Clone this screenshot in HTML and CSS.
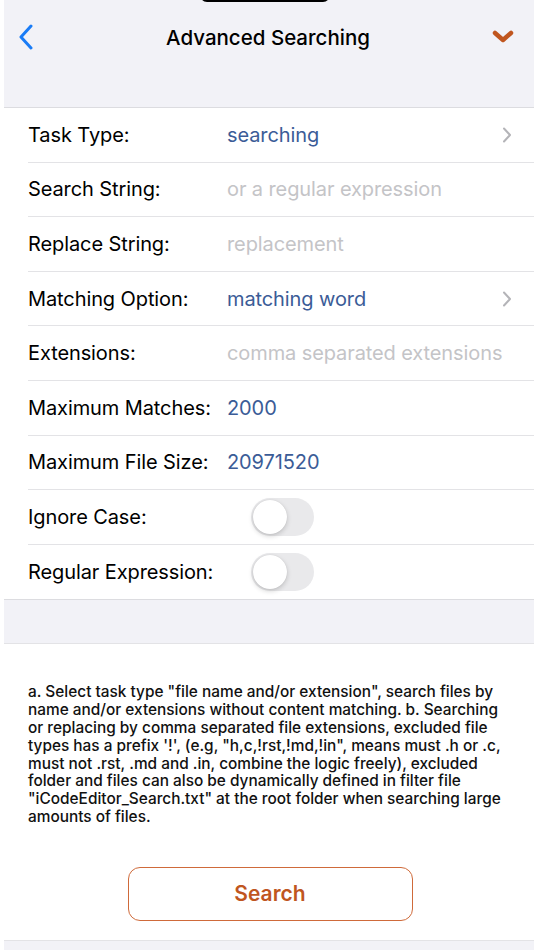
FILE: index.html
```html
<!DOCTYPE html>
<html>
<head>
<meta charset="utf-8">
<link rel="stylesheet" href="styles.css">
</head>
<body>
<div class="screen">
  <header class="header">
    <div class="notch"></div>
    <div class="nav">
      <svg class="back" width="16" height="26" viewBox="0 0 16 26"><path d="M13 2 L3 13 L13 24" fill="none" stroke="#1a7cf6" stroke-width="3" stroke-linecap="round" stroke-linejoin="round"/></svg>
      <div class="title">Advanced Searching</div>
      <svg class="down" width="22" height="14" viewBox="0 0 22 14"><path d="M3 3 L11 10 L19 3" fill="none" stroke="#c0561f" stroke-width="4.5" stroke-linecap="round" stroke-linejoin="round"/></svg>
    </div>
  </header>
  <ul class="list">
    <li class="row"><span class="label">Task Type:</span><span class="value">searching</span><svg class="chev" width="10" height="16" viewBox="0 0 10 16"><path d="M2 1.5 L8 8 L2 14.5" fill="none" stroke="#b4b4b8" stroke-width="2" stroke-linecap="round" stroke-linejoin="round"/></svg></li>
    <li class="row"><span class="label">Search String:</span><span class="placeholder">or a regular expression</span></li>
    <li class="row"><span class="label">Replace String:</span><span class="placeholder">replacement</span></li>
    <li class="row"><span class="label">Matching Option:</span><span class="value">matching word</span><svg class="chev" width="10" height="16" viewBox="0 0 10 16"><path d="M2 1.5 L8 8 L2 14.5" fill="none" stroke="#b4b4b8" stroke-width="2" stroke-linecap="round" stroke-linejoin="round"/></svg></li>
    <li class="row"><span class="label">Extensions:</span><span class="placeholder">comma separated extensions</span></li>
    <li class="row"><span class="label">Maximum Matches:</span><span class="value">2000</span></li>
    <li class="row"><span class="label">Maximum File Size:</span><span class="value">20971520</span></li>
    <li class="row"><span class="label">Ignore Case:</span><span class="toggle"><span class="knob"></span></span></li>
    <li class="row last"><span class="label">Regular Expression:</span><span class="toggle"><span class="knob"></span></span></li>
  </ul>
  <div class="band"></div>
  <div class="footer">
    <p class="note">a. Select task type "file name and/or extension", search files by name and/or extensions without content matching. b. Searching or replacing by comma separated file extensions, excluded file types has a prefix '!', (e.g, "h,c,!rst,!md,!in", means must .h or .c, must not .rst, .md and .in, combine the logic freely), excluded folder and files can also be dynamically defined in filter file "iCodeEditor_Search.txt" at the root folder when searching large amounts of files.</p>
    <div class="btn-wrap"><button class="search-btn">Search</button></div>
  </div>
  <div class="bottom-band"></div>
</div>
</body>
</html>
```

FILE: styles.css
```css
html, body {
  margin: 0;
  padding: 0;
  background: #ffffff;
}
body {
  font-family: Inter, "Noto Sans", "Liberation Sans", sans-serif;
  color: #000;
  overflow: hidden;
}
.screen {
  margin-left: 4px;
  width: 530px;
  height: 950px;
  overflow: hidden;
  position: relative;
  background: #fff;
}
.header {
  height: 107px;
  background: #f2f2f7;
  border-bottom: 1px solid #dcdce0;
  position: relative;
}
.notch {
  position: absolute;
  left: 196px;
  top: -12px;
  width: 130px;
  height: 14px;
  background: #000;
  border-radius: 10px;
}
.nav {
  display: flex;
  align-items: center;
  height: 74px;
  padding: 0 20px 0 14px;
}
.title {
  flex: 1;
  text-align: center;
  font-size: 20.5px;
  font-weight: 500;
  padding-left: 10px;
}
.list {
  list-style: none;
  margin: 0;
  padding: 0 0 0 24px;
}
.row {
  box-sizing: border-box;
  height: 54.6px;
  display: flex;
  align-items: center;
  border-bottom: 1px solid #e3e3e6;
  font-size: 20px;
  letter-spacing: -0.1px;
  padding-right: 22px;
}
.row.last {
  border-bottom: none;
}
.label {
  width: 199px;
  flex: none;
}
.value {
  color: #3b5c97;
  flex: 1;
}
.placeholder {
  color: #c4c4c7;
  flex: 1;
  white-space: nowrap;
}
.chev {
  flex: none;
}
.toggle {
  margin-left: 24px;
  width: 63px;
  height: 38px;
  border-radius: 19px;
  background: #e9e9eb;
  position: relative;
  flex: none;
}
.knob {
  position: absolute;
  left: 2px;
  top: 2px;
  width: 34px;
  height: 34px;
  border-radius: 50%;
  background: #fff;
  box-shadow: 0 2px 5px rgba(0,0,0,0.18), 0 0 1px rgba(0,0,0,0.12);
}
.band {
  height: 43px;
  background: #f2f2f7;
  border-top: 1px solid #dcdce0;
  border-bottom: 1px solid #e3e3e6;
}
.footer {
  padding: 39px 26px 0 24px;
  height: 296px;
  box-sizing: border-box;
}
.note {
  margin: 0;
  font-size: 15.4px;
  line-height: 17.8px;
  font-weight: 500;
  color: #111;
}
.btn-wrap {
  display: flex;
  justify-content: center;
  margin-top: 41px;
  padding-left: 4px;
}
.search-btn {
  width: 285px;
  height: 54px;
  border: 1.5px solid #cf6a3a;
  border-radius: 12px;
  background: #fff;
  color: #c0561f;
  font-family: Inter, "Noto Sans", "Liberation Sans", sans-serif;
  font-size: 21px;
  font-weight: 600;
}
.bottom-band {
  height: 20px;
  background: #f2f2f7;
  border-top: 1px solid #e3e3e6;
}
```
